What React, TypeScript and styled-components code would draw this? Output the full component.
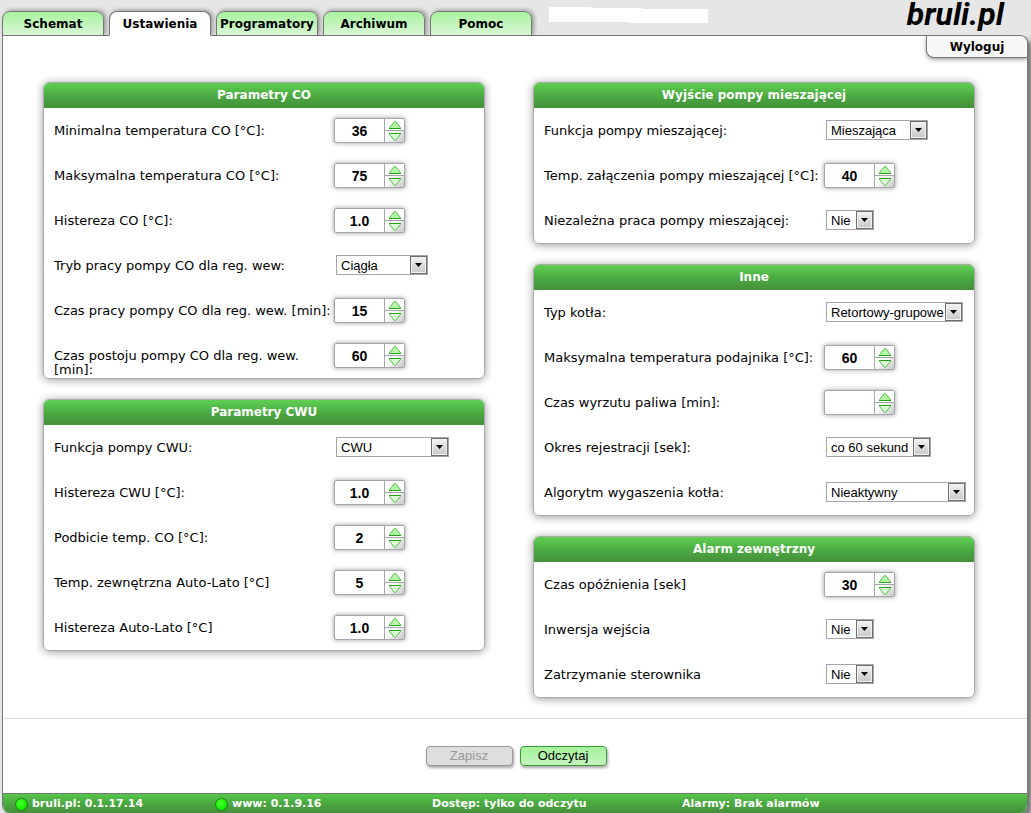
import React, { useId, useState } from "react";
import styled, { createGlobalStyle, css } from "styled-components";

const GlobalStyle = createGlobalStyle`
  *, *::before, *::after { box-sizing: border-box; }
  body {
    margin: 0;
    background: #e6e6e6;
    color: #000;
    font-family: Verdana, "DejaVu Sans", sans-serif;
    font-size: 13px;
  }
`;

const green = "linear-gradient(#5fd053, #4aa840 55%, #458f3b)";
const softShadow = "0 1px 8px rgba(0, 0, 0, 0.4)";

const Page = styled.div`
  padding: 0 3px 0 2px;
`;

const Header = styled.header`
  display: flex;
  height: 36px;
  margin-bottom: -1px;
  align-items: flex-end;
`;

const Tabs = styled.nav`
  position: relative;
  z-index: 1;
  display: flex;
  gap: 5px;
`;

const Tab = styled.a<{ $active?: boolean }>`
  width: 102px;
  height: 25px;
  border: 1px solid #777;
  border-radius: 8px 8px 0 0;
  background: linear-gradient(#a9f3a0, #d9f6d5);
  box-shadow: 2px -1px 4px rgba(0, 0, 0, 0.35);
  clip-path: inset(-6px -6px 0 -6px);
  color: #000;
  font-size: 12px;
  font-weight: bold;
  line-height: 24px;
  text-align: center;
  text-decoration: none;
  ${(p) =>
    p.$active &&
    css`
      border-bottom-color: #fff;
      background: #fff;
    `}
`;

const UserName = styled.svg`
  flex: none;
  align-self: flex-start;
  margin: 7px auto 0 17px;
`;

const Logo = styled.a`
  align-self: flex-start;
  margin-right: 24px;
  color: #000;
  font-family: Roboto, sans-serif;
  font-size: 32px;
  font-style: italic;
  font-weight: bold;
  line-height: 28px;
  text-decoration: none;
`;

const Frame = styled.main`
  border: 1px solid #777;
  border-radius: 0 8px 8px 8px;
  border-bottom: 0;
  background: #fff;
  box-shadow: 4px 4px 4px #777;
  overflow: hidden;
`;

const Logout = styled.button`
  display: block;
  width: 101px;
  height: 22px;
  margin-left: auto;
  padding: 0;
  border: solid #777;
  border-width: 0 0 1px 1px;
  border-radius: 0 0 0 8px;
  background: #f8f8f8;
  box-shadow: 0 2px 4px rgba(0, 0, 0, 0.35);
  color: #000;
  font: bold 12px/20px Verdana, "DejaVu Sans", sans-serif;
`;

const Columns = styled.div`
  display: grid;
  grid-template-columns: 1fr 1fr;
  gap: 48px;
  padding: 24px 52px 20px 40px;
`;

const Column = styled.div`
  display: flex;
  flex-direction: column;
  gap: 20px;
`;

const Panel = styled.section`
  border: 1px solid #aaa;
  border-radius: 6px;
  box-shadow: ${softShadow};
  overflow: hidden;
`;

const PanelTitle = styled.h2`
  margin: 0;
  background: ${green};
  color: #fff;
  font-size: 12px;
  line-height: 25px;
  text-align: center;
`;

const Row = styled.div`
  display: flex;
  height: 45px;
  padding-left: 10px;
`;

const RowLabel = styled.label`
  flex: none;
  width: 280px;
  padding-top: 16px;
  line-height: 14px;
`;

const Control = styled.div`
  display: flex;
  align-items: center;
`;

const SpinBox = styled.div`
  display: grid;
  grid-template-columns: 49px 20px;
  grid-template-rows: 11px 12px;
  width: 71px;
  height: 25px;
  border: 1px solid #a5a5aa;
  border-radius: 2px;
  background: #fff;
  box-shadow: 0 0 5px rgba(0, 0, 0, 0.4);
`;

const SpinInput = styled.input`
  grid-row: 1 / 3;
  min-width: 0;
  padding: 0;
  border: 0;
  background: none;
  color: #000;
  font: bold 14px "Liberation Sans", Arial, sans-serif;
  text-align: center;
`;

const SpinButton = styled.button<{ $down?: boolean }>`
  display: flex;
  align-items: center;
  justify-content: center;
  padding: 0;
  border: solid #a5a5aa;
  border-width: ${(p) => (p.$down ? "1px 0 0 1px" : "0 0 0 1px")};
  background: ${(p) => (p.$down ? "linear-gradient(135deg, #fff 30%, #c8c8c8)" : "#fff")};
`;

const SelectBox = styled.div<{ $width: number }>`
  position: relative;
  width: ${(p) => p.$width}px;
  margin: 0 0 1px 2px;
`;

const SelectInput = styled.select`
  display: block;
  width: 100%;
  height: 20px;
  padding: 0 0 0 4px;
  appearance: none;
  border: 1px solid #a5a5aa;
  border-radius: 0;
  background: #fff;
  color: #000;
  font: 13px "Liberation Sans", Arial, sans-serif;
`;

const SelectArrow = styled.span`
  position: absolute;
  top: 1px;
  right: 1px;
  display: flex;
  align-items: center;
  justify-content: center;
  width: 17px;
  height: 18px;
  border: 1px solid #6f6f6f;
  background: linear-gradient(#f4f4f4, #dcdcdc 50%, #c8c8c8);
  box-shadow: inset 0 0 0 1px #f2f2f2;
  pointer-events: none;
`;

const Actions = styled.div`
  display: flex;
  justify-content: center;
  gap: 7px;
  padding: 27px 0 27px 2px;
  border-top: 1px solid #ddd;
`;

const ActionButton = styled.button`
  width: 87px;
  height: 20px;
  padding: 0;
  border: 1px solid #3f9a3a;
  border-radius: 4px;
  background: linear-gradient(#a5f29b, #c4f5bd);
  box-shadow: 1px 2px 3px rgba(0, 0, 0, 0.35);
  color: #000;
  font: 13px/18px "Liberation Sans", Arial, sans-serif;
  &:disabled {
    border-color: #999;
    background: #dedede;
    color: #999;
  }
`;

const StatusBar = styled.footer`
  display: grid;
  grid-template-columns: 4fr 4fr 5fr 7fr;
  height: 20px;
  padding: 0 12px;
  border-top: 1px solid #777;
  background: linear-gradient(#56c64a, #4aa840 50%, #458f3b);
  color: #fff;
  font-size: 11px;
  font-weight: bold;
  line-height: 20px;
`;

const Status = styled.div<{ $plain?: boolean }>`
  display: flex;
  align-items: center;
  gap: 4px;
  padding-left: ${(p) => (p.$plain ? 17 : 0)}px;
  white-space: nowrap;
`;

const Led = styled.span`
  width: 13px;
  height: 13px;
  border: 1px solid #287a22;
  border-radius: 50%;
  background: radial-gradient(circle at 40% 35%, #4cff30, #12f000 60%, #0ccc00);
`;

type Field = { label: string; value: string; select?: number };

function SpinArrow({ down }: { down?: boolean }) {
  return (
    <svg width="14" height="10" viewBox="0 0 14 10" aria-hidden="true">
      <path
        d={down ? "M1.5 1.5h11v.8L7.6 8.4H6.4L1.5 2.3z" : "M1.5 8.5h11v-.8L7.6 1.6H6.4L1.5 7.7z"}
        fill={down ? "#dcfbd6" : "#b4f8a8"}
        stroke="#4fbd46"
        strokeLinejoin="round"
      />
      <path
        d={down ? "M1.5 1.5h11" : "M1.5 8.5h11"}
        stroke="#22a01a"
        strokeLinecap="round"
      />
    </svg>
  );
}

function FieldRow({ label, value, select }: Field) {
  const id = useId();
  const [current, setCurrent] = useState(value);
  const step = (by: number) => {
    const digits = current.includes(".") ? 1 : 0;
    setCurrent((Number(current) + by / 10 ** digits).toFixed(digits));
  };
  return (
    <Row>
      <RowLabel htmlFor={id}>{label}</RowLabel>
      <Control>
        {select ? (
          <SelectBox $width={select}>
            <SelectInput id={id} defaultValue={value}>
              <option>{value}</option>
            </SelectInput>
            <SelectArrow>
              <svg width="7" height="4" viewBox="0 0 7 4" aria-hidden="true">
                <path d="M0 0h7L3.5 4z" />
              </svg>
            </SelectArrow>
          </SelectBox>
        ) : (
          <SpinBox>
            <SpinInput id={id} value={current} onChange={(e) => setCurrent(e.target.value)} />
            <SpinButton type="button" aria-label="+" onClick={() => step(1)}>
              <SpinArrow />
            </SpinButton>
            <SpinButton type="button" aria-label="-" $down onClick={() => step(-1)}>
              <SpinArrow down />
            </SpinButton>
          </SpinBox>
        )}
      </Control>
    </Row>
  );
}

function FieldPanel({ title, fields }: { title: string; fields: Field[] }) {
  return (
    <Panel>
      <PanelTitle>{title}</PanelTitle>
      {fields.map((f) => (
        <FieldRow key={f.label} {...f} />
      ))}
    </Panel>
  );
}

const tabs = ["Schemat", "Ustawienia", "Programatory", "Archiwum", "Pomoc"];

const columns: { title: string; fields: Field[] }[][] = [
  [
    {
      title: "Parametry CO",
      fields: [
        { label: "Minimalna temperatura CO [°C]:", value: "36" },
        { label: "Maksymalna temperatura CO [°C]:", value: "75" },
        { label: "Histereza CO [°C]:", value: "1.0" },
        { label: "Tryb pracy pompy CO dla reg. wew:", value: "Ciągła", select: 92 },
        { label: "Czas pracy pompy CO dla reg. wew. [min]:", value: "15" },
        { label: "Czas postoju pompy CO dla reg. wew. [min]:", value: "60" },
      ],
    },
    {
      title: "Parametry CWU",
      fields: [
        { label: "Funkcja pompy CWU:", value: "CWU", select: 113 },
        { label: "Histereza CWU [°C]:", value: "1.0" },
        { label: "Podbicie temp. CO [°C]:", value: "2" },
        { label: "Temp. zewnętrzna Auto-Lato [°C]", value: "5" },
        { label: "Histereza Auto-Lato [°C]", value: "1.0" },
      ],
    },
  ],
  [
    {
      title: "Wyjście pompy mieszającej",
      fields: [
        { label: "Funkcja pompy mieszającej:", value: "Mieszająca", select: 102 },
        { label: "Temp. załączenia pompy mieszającej [°C]:", value: "40" },
        { label: "Niezależna praca pompy mieszającej:", value: "Nie", select: 48 },
      ],
    },
    {
      title: "Inne",
      fields: [
        { label: "Typ kotła:", value: "Retortowy-grupowe", select: 137 },
        { label: "Maksymalna temperatura podajnika [°C]:", value: "60" },
        { label: "Czas wyrzutu paliwa [min]:", value: "" },
        { label: "Okres rejestracji [sek]:", value: "co 60 sekund", select: 105 },
        { label: "Algorytm wygaszenia kotła:", value: "Nieaktywny", select: 140 },
      ],
    },
    {
      title: "Alarm zewnętrzny",
      fields: [
        { label: "Czas opóźnienia [sek]", value: "30" },
        { label: "Inwersja wejścia", value: "Nie", select: 48 },
        { label: "Zatrzymanie sterownika", value: "Nie", select: 48 },
      ],
    },
  ],
];

export default function App() {
  return (
    <Page>
      <GlobalStyle />
      <Header>
        <Tabs>
          {tabs.map((t) => (
            <Tab key={t} href="#" $active={t === "Ustawienia"}>
              {t}
            </Tab>
          ))}
        </Tabs>
        <UserName width="159" height="16" viewBox="0 0 159 16" aria-hidden="true">
          <path d="M0 0h42v1h51v1h65l1 1v13H81v-1H0z" fill="#fff" />
        </UserName>
        <Logo href="#">bruli.pl</Logo>
      </Header>
      <Frame>
        <Logout type="button">Wyloguj</Logout>
        <Columns>
          {columns.map((panels, i) => (
            <Column key={i}>
              {panels.map((p) => (
                <FieldPanel key={p.title} {...p} />
              ))}
            </Column>
          ))}
        </Columns>
        <Actions>
          <ActionButton type="button" disabled>
            Zapisz
          </ActionButton>
          <ActionButton type="button">Odczytaj</ActionButton>
        </Actions>
        <StatusBar>
          <Status>
            <Led />
            bruli.pl: 0.1.17.14
          </Status>
          <Status>
            <Led />
            www: 0.1.9.16
          </Status>
          <Status $plain>Dostęp: tylko do odczytu</Status>
          <Status $plain>Alarmy: Brak alarmów</Status>
        </StatusBar>
      </Frame>
    </Page>
  );
}
